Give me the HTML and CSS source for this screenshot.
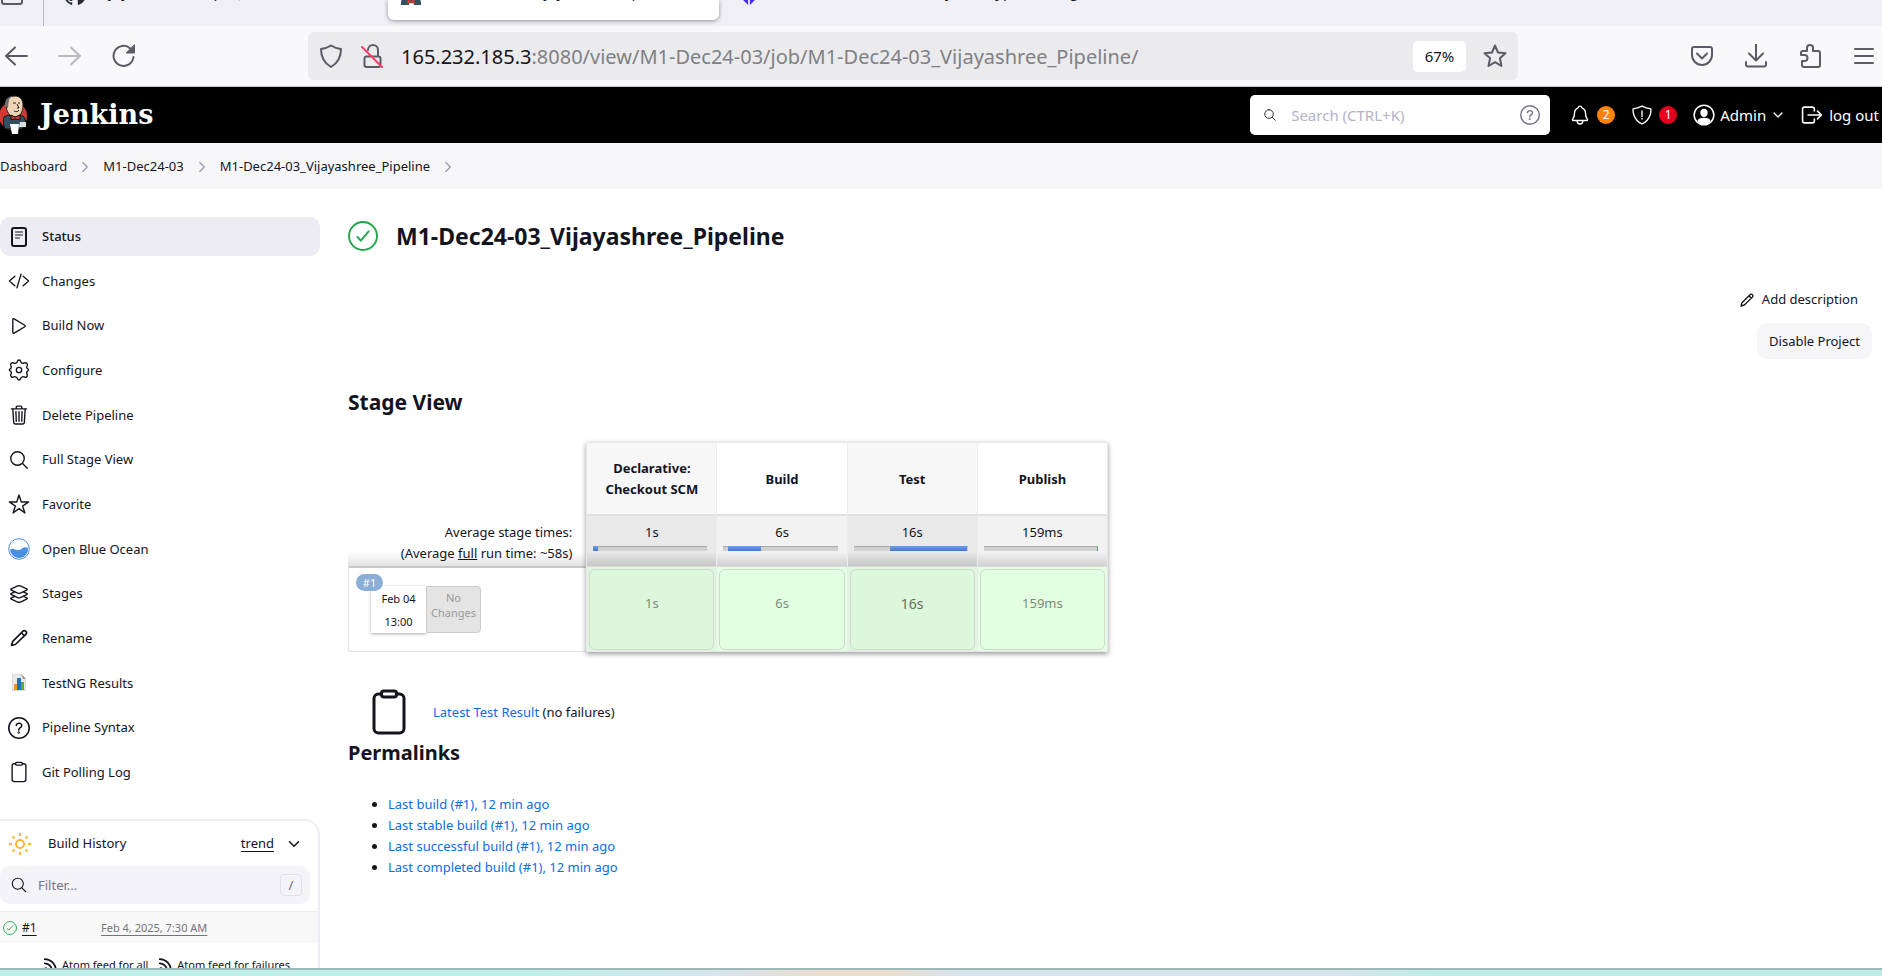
FILE: index.html
```
<!DOCTYPE html>
<html lang="en">
<head>
<meta charset="utf-8">
<title>M1-Dec24-03_Vijayashree_Pipeline [Jenkins]</title>
<link rel="stylesheet" href="styles.css">
</head>
<body>
<svg class="defs" aria-hidden="true">
  <symbol id="i-check" viewBox="0 0 512 512"><circle cx="256" cy="256" r="238"/><path d="M352 176 217.600 336 160 272"/></symbol>
  <symbol id="i-search" viewBox="0 0 512 512"><path d="M221.090 64a157.090 157.090 0 1 0 157.090 157.090A157.100 157.100 0 0 0 221.090 64z"/><path d="M338.290 338.290 448 448"/></symbol>
  <symbol id="i-pen" viewBox="0 0 24 24"><path d="M3 21l1.500-5L16.500 4a2.600 2.600 0 0 1 3.700 3.700L8 19.500zM14.800 5.700l3.600 3.600"/></symbol>
  <symbol id="i-clip" viewBox="0 0 512 512"><path d="M336 64h32a48 48 0 0 1 48 48v320a48 48 0 0 1-48 48H144a48 48 0 0 1-48-48V112a48 48 0 0 1 48-48h32"/><rect x="176" y="32" width="160" height="64" rx="26"/></symbol>
  <symbol id="i-help" viewBox="0 0 512 512"><circle cx="256" cy="256" r="208"/><path d="M200 202.290s.84-17.500 19.570-32.570C230.680 160.770 244 158.180 256 158c10.930-.14 20.690 1.670 26.530 4.450 10 4.760 29.470 16.380 29.470 41.090 0 26-17 37.810-36.370 50.800S251 281.430 251 296"/><circle cx="250" cy="348" r="8"/></symbol>
  <symbol id="i-down" viewBox="0 0 512 512"><path d="M112 184l144 144 144-144"/></symbol>
  <symbol id="i-right" viewBox="0 0 512 512"><path d="M184 112l144 144-144 144"/></symbol>
  <symbol id="i-rss" viewBox="0 0 24 24"><path d="M3 2a19 19 0 0 1 19 19M3 9a12 12 0 0 1 12 12"/><circle cx="5" cy="19" r="1.500"/></symbol>
</svg>

<div class="tabs">
  <svg class="ico pin" viewBox="0 0 24 24"><rect x="2" y="-4" width="20" height="20" rx="2"/></svg>
  <div class="tab tab-first">
    <svg class="fav" viewBox="0 0 24 24"><path fill="#24292f" d="M12 .5a12 12 0 0 0-3.800 23.400c.6.100.8-.3.800-.6v-2.200c-3.300.7-4-1.400-4-1.400-.6-1.400-1.300-1.800-1.300-1.800-1.100-.7.1-.7.1-.7 1.200.1 1.800 1.200 1.800 1.200 1.100 1.800 2.800 1.300 3.500 1 .1-.8.400-1.300.8-1.600-2.700-.3-5.500-1.300-5.500-5.900 0-1.300.5-2.400 1.200-3.200 0-.3-.5-1.500.2-3.200 0 0 1-.3 3.300 1.200a11.500 11.500 0 0 1 6 0c2.300-1.500 3.300-1.200 3.300-1.200.7 1.700.2 2.900.1 3.200.8.800 1.200 1.900 1.200 3.200 0 4.600-2.800 5.600-5.500 5.900.5.400.9 1.100.9 2.200v3.300c0 .3.200.7.800.6A12 12 0 0 0 12 .5z"/></svg>
    <span>Vijayashree24/repo, Java</span>
  </div>
  <div class="tab tab-active">
    <svg class="fav" viewBox="0 0 24 24"><path fill="#335061" d="M1 24c0-8 3-11 11-11s11 3 11 11z"/><path fill="#d33833" d="M8 17l4 3 4-3v6l-4-2-4 2z"/><path fill="#fff" d="M10 22h5v2h-5z"/></svg>
    <span>M1-Dec24-03_Vijayashree_Pipe</span>
  </div>
  <div class="tab tab-last">
    <svg class="fav" viewBox="0 0 24 24"><path fill="#4a2be0" d="M5 10l6 6v8l-6-6zM19 10l-6 6v8l6-6z"/></svg>
    <span>Selenium - How to use my web types - Google</span>
  </div>
</div>

<div class="toolbar">
  <div class="nav-btns">
    <button aria-label="Back"><svg class="ico" viewBox="0 0 24 24"><path d="M23 12H2M11 3.500 2 12l9 8.500"/></svg></button>
    <button aria-label="Forward" class="off"><svg class="ico" viewBox="0 0 24 24"><path d="M1 12h21M13 3.500l9 8.500-9 8.500"/></svg></button>
    <button aria-label="Reload"><svg class="ico" viewBox="0 0 24 24"><path d="M21.500 13a10 10 0 1 1-3.200-8.500"/><path class="solid" d="M22.500 1v8h-8z"/></svg></button>
  </div>
  <div class="urlbar">
    <svg class="ico" viewBox="0 0 24 24"><path d="M12 1.500c3 2 6 3 10 3.500 0 8-3 14-10 18C5 19 2 13 2 5c4-.5 7-1.500 10-3.500z"/></svg>
    <svg class="ico" viewBox="0 0 24 24"><path d="M6 12.500h12.500a2 2 0 0 1 2 2V21a2 2 0 0 1-2 2h-12a2 2 0 0 1-2-2v-6.500a2 2 0 0 1 1.500-2zM8 6a5 5 0 0 1 10 0v6"/><path class="slash" d="M2 3l20 20"/></svg>
    <div class="url"><b>165.232.185.3</b>:8080/view/M1-Dec24-03/job/M1-Dec24-03_Vijayashree_Pipeline/</div>
    <button class="zoom">67%</button>
    <svg class="ico" viewBox="0 0 24 24"><path d="M12 1.500l3 7 7.500.800-5.600 5 1.600 7.700L12 18.200 5.500 22l1.600-7.700-5.600-5L9 8.500z"/></svg>
  </div>
  <div class="tools">
    <button aria-label="Pocket"><svg class="ico" viewBox="0 0 24 24"><path d="M4 3h16a2 2 0 0 1 2 2v6a10 10 0 0 1-20 0V5a2 2 0 0 1 2-2zM7 9.500l5 5 5-5"/></svg></button>
    <button aria-label="Downloads"><svg class="ico" viewBox="0 0 24 24"><path d="M12 0v16M5 9.500l7 7 7-7M2 18v2.500a2 2 0 0 0 2 2h16a2 2 0 0 0 2-2V18"/></svg></button>
    <button aria-label="Extensions"><svg class="ico" viewBox="0 0 24 24"><path d="M9 7V4a3 3 0 0 1 6 0v3h5a2 2 0 0 1 2 2v12a2 2 0 0 1-2 2H6a2 2 0 0 1-2-2v-4h2.500a2.500 2.500 0 0 0 0-6H3V9a2 2 0 0 1 2-2z"/></svg></button>
    <button aria-label="Menu"><svg class="ico" viewBox="0 0 24 24"><path d="M3 5h18M3 12h18M3 19h18"/></svg></button>
  </div>
</div>

<header class="header">
  <a class="brand" href="#">
    <svg class="butler" viewBox="0 0 28 40"><circle cx="13" cy="21" r="14" fill="#d33833"/><path fill="#335061" stroke="#111" d="M4 22c4-3 16-3 20 0l2 6-4 6H5c-2-4-2-8-1-12z"/><path fill="#f0d6b7" stroke="#222" d="M6 9c0-5 4-8 9-8s8 4 8 9c0 7-3 12-8 12S6 17 6 9z"/><path fill="#6d6b6d" d="M5 12C4 6 7 2 12 1 8 4 9 7 8 13z"/><path fill="none" stroke="#222" d="M13 8h3M18 8h2M14 16c2 1 4 1 5-1M17 9l2 4h-2"/><path fill="#d33833" stroke="#111" d="M11 20l4 2 5-2v5l-5-1-4 1z"/><path fill="#fff" d="M10 29h9l-1 10h-6z"/><path fill="#ddd" d="M20 27h6v5h-7z"/></svg>
    <span>Jenkins</span>
  </a>
  <label class="search">
    <svg class="ico s14"><use href="#i-search"/></svg>
    <input type="text" placeholder="Search (CTRL+K)" aria-label="Search">
    <svg class="ico s20 help" viewBox="32 32 448 448"><use href="#i-help" width="512" height="512"/></svg>
  </label>
  <a class="hd-item" href="#" aria-label="Notifications"><svg class="ico s22" viewBox="0 0 512 512"><path d="M427.680 351.430C402 320 383.870 304 383.870 217.350 383.870 138 343.350 109.730 310 96c-4.430-1.820-8.600-6-9.950-10.550C294.200 65.540 277.800 48 256 48s-38.210 17.550-44 37.470c-1.350 4.600-5.520 8.710-9.950 10.530-33.390 13.750-73.870 41.920-73.870 121.350C128.130 304 110 320 84.320 351.430 73.680 364.450 83 384 101.610 384h308.880c18.510 0 27.770-19.610 17.190-32.570zM320 384v16a64 64 0 0 1-128 0v-16"/></svg><span class="badge warn">2</span></a>
  <a class="hd-item" href="#" aria-label="Security"><svg class="ico s22" viewBox="0 0 512 512"><path d="M463.120 112.370C373.680 96.330 336.710 84.450 256 48c-80.710 36.450-117.680 48.330-207.120 64.370C32.700 369.130 240.580 457.790 256 464c15.420-6.210 223.300-94.870 207.120-351.630zM256 160v128M256 336v12"/></svg><span class="badge err">1</span></a>
  <a class="hd-item user" href="#"><svg class="ico s22" viewBox="24 24 464 464"><circle cx="256" cy="256" r="208"/><path fill="currentColor" d="M256 140c40 0 66 32 62 72s-30 72-62 72-58-32-62-72 22-72 62-72zM130 390c20-50 70-60 126-60s106 10 126 60c-40 40-80 58-126 58s-86-18-126-58z"/></svg><span>Admin</span><svg class="ico s14 thick"><use href="#i-down"/></svg></a>
  <a class="hd-item" href="#"><svg class="ico s22" viewBox="32 32 448 448"><path d="M304 336v40a40 40 0 0 1-40 40H104a40 40 0 0 1-40-40V136a40 40 0 0 1 40-40h152c22 0 48 18 48 40v40M368 336l80-80-80-80M176 256h256"/></svg><span>log out</span></a>
</header>

<nav class="crumbs">
  <a href="#">Dashboard</a><svg class="ico s16"><use href="#i-right"/></svg>
  <a href="#">M1-Dec24-03</a><svg class="ico s16"><use href="#i-right"/></svg>
  <a href="#">M1-Dec24-03_Vijayashree_Pipeline</a><svg class="ico s16"><use href="#i-right"/></svg>
</nav>

<div class="page">
  <aside class="side">
    <nav class="tasks">
      <a class="on" href="#"><svg class="ico s22" viewBox="0 0 22 22"><rect x="4" y="2" width="14" height="18" rx="2"/><path class="fine" d="M7.500 6h7M7.500 9h7M7.500 12h4"/></svg>Status</a>
      <a href="#"><svg class="ico s22" viewBox="0 0 512 512"><path d="M160 368 32 256l128-112M352 368l128-112-128-112M304 96l-96 320"/></svg>Changes</a>
      <a href="#"><svg class="ico s22" viewBox="0 0 512 512"><path d="M112 111v290c0 17.440 17 28.520 31 20.160l247.900-148.370c12.120-7.250 12.120-26.330 0-33.580L143 90.840c-14-8.360-31 2.720-31 20.160z"/></svg>Build Now</a>
      <a href="#"><svg class="ico s22" viewBox="0 0 512 512"><circle cx="256" cy="256" r="62"/><path d="M218 62a38 38 0 0 1 76 0 62 62 0 0 0 62 36 50 50 0 0 0 30-8 48 48 0 0 1 62 62 60 60 0 0 0 0 74q32 12 32 30t-32 30a60 60 0 0 0 0 74 48 48 0 0 1-62 62 62 62 0 0 0-92 28 38 38 0 0 1-76 0 62 62 0 0 0-92-28 48 48 0 0 1-62-62 60 60 0 0 0 0-74q-32-12-32-30t32-30a60 60 0 0 0 0-74 48 48 0 0 1 62-62 62 62 0 0 0 92-28z"/></svg>Configure</a>
      <a href="#"><svg class="ico s22" viewBox="0 0 512 512"><path d="M112 112l20 320c.95 18.490 14.400 32 32 32h184c17.670 0 30.870-13.510 32-32l20-320M80 112h352M192 112V72a24 24 0 0 1 24-24h80a24 24 0 0 1 24 24v40M256 176v224M184 176l8 224M328 176l-8 224"/></svg>Delete Pipeline</a>
      <a href="#"><svg class="ico s22"><use href="#i-search"/></svg>Full Stage View</a>
      <a href="#"><svg class="ico s22" viewBox="0 0 512 512"><path d="M480 208H308L256 48l-52 160H32l140 96-54 160 138-100 138 100-54-160z"/></svg>Favorite</a>
      <a href="#"><svg class="s22" viewBox="0 0 22 22"><circle cx="11" cy="11" r="10.300" fill="#fff" stroke="#4a90e2"/><path fill="#4a90e2" d="M2 12c3-3 5 1 9 0s4-4 9-2a9 9 0 0 1-18 2z"/></svg>Open Blue Ocean</a>
      <a href="#"><svg class="ico s22" viewBox="0 0 512 512"><path d="M434.800 137.650l-149.360-68.100c-16.190-7.400-42.690-7.400-58.880 0L77.300 137.650c-17.600 8-17.600 21.090 0 29.090l148 67.500c16.890 7.700 44.690 7.700 61.580 0l148-67.500c17.520-8 17.520-21.100-.08-29.090zM160 308.520l-82.700 37.110c-17.600 8-17.600 21.100 0 29.100l148 67.500c16.890 7.690 44.690 7.690 61.580 0l148-67.500c17.600-8 17.600-21.100 0-29.100l-79.940-38.470M160 204.480l-82.800 37.160c-17.600 8-17.600 21.100 0 29.100l148 67.490c16.890 7.700 44.690 7.700 61.580 0l148-67.490c17.700-8 17.700-21.100.1-29.100L352 204.480"/></svg>Stages</a>
      <a href="#"><svg class="ico s22 pen"><use href="#i-pen"/></svg>Rename</a>
      <a href="#"><svg class="s22" viewBox="0 0 22 22"><path fill="#e9e9e9" stroke="#dcdcdc" d="M4.500 2.500h9l4 4v12h-13z"/><path fill="#999" d="M13 2l5 5h-3z"/><path fill="#f7941d" d="M6 12h3v6H6z"/><path fill="#1b75bb" d="M9 6h4v12H9z"/><path fill="#5fa832" d="M13 10h3v8h-3z"/></svg>TestNG Results</a>
      <a href="#"><svg class="ico s22" viewBox="32 32 448 448"><use href="#i-help" width="512" height="512"/></svg>Pipeline Syntax</a>
      <a href="#"><svg class="ico s22"><use href="#i-clip"/></svg>Git Polling Log</a>
    </nav>

    <section class="history">
      <div class="hist-head">
        <svg class="ico s22 sun" viewBox="0 0 22 22"><circle cx="11" cy="11" r="4"/><path d="M11 0v3M11 19v3M0 11h3M19 11h3M3.500 3.500l2 2M16.500 16.500l2 2M3.500 18.500l2-2M16.500 5.500l2-2"/></svg>
        <span class="grow">Build History</span>
        <a href="#">trend</a>
        <svg class="ico s16 thick"><use href="#i-down"/></svg>
      </div>
      <label class="filter">
        <svg class="ico s18"><use href="#i-search"/></svg>
        <input type="text" placeholder="Filter..." aria-label="Filter builds">
        <kbd>/</kbd>
      </label>
      <div class="build">
        <svg class="ico s14 green"><use href="#i-check"/></svg>
        <a class="num" href="#">#1</a>
        <a class="date" href="#">Feb 4, 2025, 7:30 AM</a>
      </div>
      <div class="feeds">
        <a href="#"><svg class="ico rss"><use href="#i-rss"/></svg>Atom feed for all</a>
        <a href="#"><svg class="ico rss"><use href="#i-rss"/></svg>Atom feed for failures</a>
      </div>
    </section>
  </aside>

  <main class="main">
    <h1><svg class="ico green s30"><use href="#i-check"/></svg>M1-Dec24-03_Vijayashree_Pipeline</h1>
    <div class="actions">
      <a href="#"><svg class="ico s16 pen"><use href="#i-pen"/></svg>Add description</a>
      <button>Disable Project</button>
    </div>
    <h2>Stage View</h2>
    <div class="stage-wrap">
      <table class="stages">
        <thead>
          <tr class="names"><td></td><th>Declarative: Checkout SCM</th><th>Build</th><th>Test</th><th>Publish</th></tr>
          <tr class="avg">
            <td>Average stage times:<br>(Average <u>full</u> run time: ~58s)</td>
            <td>1s<div class="bar"><i style="left:0%;width:4%"></i></div></td>
            <td>6s<div class="bar"><i style="left:4%;width:29%"></i></div></td>
            <td>16s<div class="bar"><i style="left:32%;width:67%"></i></div></td>
            <td>159ms<div class="bar"><i style="left:99%;width:1%"></i></div></td>
          </tr>
        </thead>
        <tbody>
          <tr class="run">
            <td><div class="run-info"><span class="run-no">#1</span><div class="when">Feb 04<br>13:00</div><div class="nochg">No<br>Changes</div></div></td>
            <td><div class="cell">1s</div></td>
            <td><div class="cell">6s</div></td>
            <td><div class="cell big">16s</div></td>
            <td><div class="cell">159ms</div></td>
          </tr>
        </tbody>
      </table>
    </div>
    <div class="result">
      <svg class="ico s48"><use href="#i-clip"/></svg>
      <p><a href="#">Latest Test Result</a> (no failures)</p>
    </div>
    <h2 class="perma">Permalinks</h2>
    <ul>
      <li><a href="#">Last build (#1), 12 min ago</a></li>
      <li><a href="#">Last stable build (#1), 12 min ago</a></li>
      <li><a href="#">Last successful build (#1), 12 min ago</a></li>
      <li><a href="#">Last completed build (#1), 12 min ago</a></li>
    </ul>
  </main>
</div>
<div class="desk"></div>
</body>
</html>
```
FILE: styles.css
```
* { box-sizing: border-box; }
body {
  margin: 0;
  height: 100vh;
  display: flex;
  flex-direction: column;
  overflow: hidden;
  background: #fff;
  color: #14141f;
  font: 13px/21px "Noto Sans", "Open Sans", sans-serif;
}
a { color: inherit; text-decoration: none; }
button, input { font: inherit; color: inherit; border: 0; padding: 0; background: none; }
.defs { position: absolute; width: 0; height: 0; }
.ico { fill: none; stroke: currentColor; stroke-width: 32px; stroke-linecap: round; stroke-linejoin: round; flex: none; }
.ico[viewBox="0 0 24 24"] { stroke-width: 2px; width: 24px; height: 24px; }
.ico[viewBox="0 0 22 22"] { stroke-width: 2px; }
.ico.pen { stroke-width: 2px; }
.ico.rss { stroke-width: 3px; width: 14px; height: 16px; }
.ico .fine { stroke-width: 1px; }
.s14 { width: 14px; height: 14px; flex: none; }
.s16 { width: 16px; height: 16px; flex: none; }
.s18 { width: 18px; height: 18px; flex: none; }
.s20 { width: 20px; height: 20px; flex: none; }
.s22 { width: 22px; height: 22px; flex: none; }
.s30 { width: 30px; height: 30px; flex: none; }
.s48 { width: 48px; height: 48px; flex: none; }
.ico.thick { stroke-width: 48px; }
.green { color: #1ea64b; }

/* browser chrome */
.tabs {
  display: flex;
  align-items: flex-start;
  flex: none;
  height: 26px;
  overflow: hidden;
  background: #f0eff5;
  font-size: 15px;
}
.pin { margin: -12px 19px 0 0; color: #5b5b66; }
.tab { display: flex; align-items: flex-end; gap: 10px; height: 5px; white-space: nowrap; }
.tab .fav { width: 22px; height: 22px; flex: none; }
.tab span { padding-bottom: 4px; line-height: 20px; }
.tab-first { height: 26px; width: 345px; padding: 0 0 21px 20px; border-left: 1px solid #b8b8c0; }
.tab-active {
  height: 20px;
  width: 331px;
  padding: 0 0 15px 12px;
  background: #fff;
  border-radius: 0 0 6px 6px;
  box-shadow: 0 1px 4px #0006;
}
.tab-last { padding-left: 19px; }
.toolbar {
  display: flex;
  align-items: center;
  flex: none;
  height: 61px;
  padding: 6px 6px 6px 4px;
  background: #f9f9fb;
  border-bottom: 1px solid #c9c9cf;
  color: #5b5b66;
}
.toolbar button { display: flex; }
.nav-btns { display: flex; gap: 30px; width: 304px; }
.off { opacity: .4; }
.ico .solid { fill: currentColor; stroke-width: 1px; }
.slash { stroke: #ff3b6b; }
.urlbar {
  flex: 1;
  display: flex;
  align-items: center;
  gap: 17px;
  height: 48px;
  padding: 0 11px;
  border-radius: 6px;
  background: #ebebed;
}
.url { flex: 1; padding-top: 2px; font-size: 20px; line-height: 24px; color: #808084; white-space: nowrap; }
.url b { font-weight: 400; color: #15141a; }
.toolbar .zoom {
  justify-content: center;
  width: 53px;
  padding: 5px 0;
  border-radius: 5px;
  background: #fff;
  color: #15141a;
  font-size: 15px;
}
.tools { display: flex; justify-content: space-between; width: 186px; margin-left: 172px; }

/* jenkins header */
.header {
  display: flex;
  align-items: center;
  flex: none;
  height: 56px;
  padding-right: 3px;
  background: #000;
  color: #fff;
  font-size: 15px;
}
.brand { display: flex; align-items: center; gap: 12px; margin-right: auto; font: bold 27px/36px "DejaVu Serif", Georgia, serif; }
.butler { width: 28px; height: 40px; }
.search {
  display: flex;
  align-items: center;
  gap: 14px;
  width: 300px;
  height: 40px;
  margin-right: 3px;
  padding: 0 10px 0 13px;
  border-radius: 5px;
  background: #fff;
  color: #14141f;
}
.search input { flex: 1; min-width: 0; outline: 0; }
.search input::placeholder { color: #b3b3c6; }
.help { color: #73738c; }
.hd-item { display: flex; align-items: center; gap: 6px; margin-left: 16px; white-space: nowrap; }
.user { gap: 5px; }
.badge { width: 18px; height: 18px; border-radius: 9px; font-size: 12px; line-height: 18px; text-align: center; }
.warn { background: #ff820a; }
.err { background: #e6001f; }

.crumbs { display: flex; align-items: center; gap: 10px; flex: none; height: 46px; padding-top: 1px; background: #f6f6f9; }
.crumbs svg { color: #9a9ab0; }
.crumbs .ico { stroke-width: 40px; }
.crumbs a { white-space: nowrap; }

/* page */
.page { flex: 1; min-height: 0; overflow: hidden; display: flex; gap: 28px; padding-top: 28px; }
.side { flex: none; width: 320px; }
.tasks { display: flex; flex-direction: column; justify-content: space-between; height: 575px; margin-bottom: 27px; }
.tasks a { display: flex; align-items: center; gap: 12px; height: 39px; padding-left: 8px; border-radius: 10px; }
.tasks .on { background: #ececf2; font-weight: 500; }
.tasks .pen { padding: 1px; }
.history { border: 2px solid #ececf2; border-left: 0; border-radius: 0 16px 0 0; }
.hist-head { display: flex; align-items: center; gap: 12px; height: 45px; padding: 0 16px 0 9px; }
.grow { flex: 1; padding-left: 5px; }
.history a { text-decoration: underline; text-underline-offset: 3px; }
.hist-head .sun { color: #ffb62e; stroke-linecap: butt; }
.filter { display: flex; align-items: center; gap: 10px; height: 38px; margin-right: 8px; padding: 0 8px 0 10px; border-radius: 10px; background: #f3f3f8; }
.filter input { flex: 1; min-width: 0; outline: 0; }
.filter input::placeholder { color: #73738c; }
.filter kbd { width: 22px; border: 1px solid #e0e0ea; border-radius: 4px; font: inherit; line-height: 20px; text-align: center; color: #6a6a80; }
.build { display: flex; align-items: center; height: 32px; margin-top: 7px; padding-left: 3px; border-top: 1px solid #ececf2; background: #f8f8f8; font-size: 11px; }
.build .num { width: 84px; padding-left: 5px; font-size: 12px; }
.build .date { color: #73737a; }
.feeds { display: flex; gap: 10px; padding: 11px 0 20px 43px; font-size: 11px; }
.history .feeds a { display: flex; align-items: center; gap: 5px; text-decoration: none; white-space: nowrap; }

.main { flex: 1; min-width: 0; padding-right: 10px; }
h1, h2 { margin: 0; font-weight: 700; }
h1 { display: flex; align-items: center; gap: 18px; font-size: 23px; line-height: 38px; }
.actions { display: flex; flex-direction: column; align-items: flex-end; gap: 13px; margin: 34px 0 28px; }
.actions a { display: flex; align-items: center; gap: 7px; margin-right: 14px; }
.actions button { height: 36px; padding: 0 12px; border-radius: 10px; background: #f6f6f9; }
h2 { font-size: 21px; line-height: 30px; }
.stage-wrap { position: relative; width: 760px; margin-top: 25px; }
.stage-wrap::after {
  content: "";
  position: absolute;
  inset: 0 0 0 238px;
  border: 1px solid #e6e6ec;
  box-shadow: 0 2px 5px #0006;
  pointer-events: none;
}
.stages { width: 100%; table-layout: fixed; border-spacing: 0; text-align: center; }
.stages td, .stages th { padding: 0; width: 130px; }
.stages tr > :first-child { width: 239px; }
.stages tr > :nth-child(n+2) { border-right: 1px solid #ededf1; }
.names th { height: 74px; padding: 2px 15px 0; border-bottom: 2px solid #e0e0e0; }
.names th:nth-child(even) { background: #f7f7f7; }
.avg td { height: 50px; padding-top: 6px; vertical-align: top; background: linear-gradient(#f2f2f2 72%, #d0d0d0); }
.avg td:nth-child(even) { background: linear-gradient(#e9e9e9 72%, #c6c6c6); }
.avg td:first-child { padding-right: 15px; text-align: right; background: linear-gradient(#fff 72%, #e2e2e2); }
.bar { position: relative; height: 5px; margin: 3px 9px 0 6px; background: #d2d2d2; box-shadow: inset 0 1px 1px #0003; }
.bar i { position: absolute; top: 0; bottom: 0; background: linear-gradient(#6f9fe0, #4479c8); }
.run td { height: 86px; padding: 2px; border-top: 1px solid #dcdce0; background: #e3ffe2; }
.run td:nth-child(even) { background: #dff5de; }
.run td:first-child { padding: 6px 0 0 7px; vertical-align: top; border: 1px solid #e4e4e4; border-top: 2px solid #c8c8c8; background: #fff; }
.cell { display: flex; align-items: center; justify-content: center; height: 81px; padding-bottom: 12px; border: 1px solid #d0d8d0; border-radius: 6px; color: #7a8c7a; }
.run td:nth-child(even) .cell { background: #dcf7db; }
.cell.big { font-size: 14px; color: #5f705f; }
.run-info { position: relative; display: flex; padding: 12px 0 0 15px; font-size: 11px; }
.run-no {
  position: absolute;
  left: 0;
  top: 0;
  width: 27px;
  border-radius: 9px;
  background: #8aaed6;
  color: #fff;
  line-height: 17px;
}
.when { width: 55px; height: 47px; padding-top: 1px; line-height: 23px; background: #fff; box-shadow: 0 1px 3px #0005; }
.nochg { width: 55px; height: 47px; padding-top: 3px; line-height: 15px; border: 1px solid #ccc; border-radius: 0 4px 4px 0; background: #e4e4e4; color: #9a9a9a; }
.result { display: flex; align-items: center; gap: 20px; margin-top: 36px; padding-left: 17px; }
.result p { margin: 0; }
.result a, .main li a { color: #0b6ee8; }
.perma { margin-top: 2px; font-size: 20px; }
.main ul { margin: 26px 0 0; padding-left: 40px; }

.desk { flex: none; height: 8px; border-top: 2px solid #9dbab8; background: linear-gradient(90deg, #c0eeea 29%, #d6e5ee 38%, #ebdccf 44%, #ebdccf 47%, #d8e4ed 51%, #d8e4ed 71%, #bfece7 76%); }
```
